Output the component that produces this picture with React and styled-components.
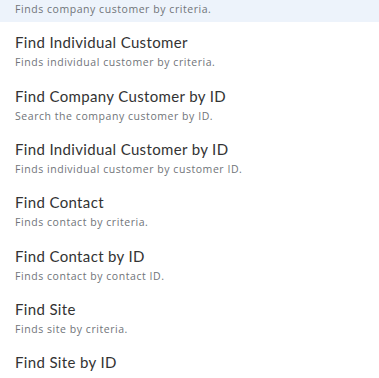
import React from "react";
import styled, { createGlobalStyle } from "styled-components";

const Global = createGlobalStyle`
  html, body { margin: 0; padding: 0; background: #ffffff; }
  body { font-family: Lato, "Open Sans", sans-serif; overflow: hidden; }
`;

const Viewport = styled.div`
  width: 379px;
  height: 378px;
  overflow: hidden;
  background: #ffffff;
`;

const List = styled.ul`
  list-style: none;
  margin: -31.33px 0 0;
  padding: 0;
`;

const Item = styled.li`
  padding: 9.4px 15px 3.93px;
  background: ${(p) => (p.$active ? "#edf3fb" : "transparent")};
  cursor: pointer;
`;

const Title = styled.div`
  font-family: Lato, sans-serif;
  font-size: 15px;
  line-height: 22px;
  letter-spacing: 0.35px;
  color: #333333;
  white-space: nowrap;
`;

const Subtitle = styled.div`
  font-family: "Open Sans", sans-serif;
  font-size: 10.5px;
  line-height: 18px;
  letter-spacing: 0.55px;
  color: #707479;
  white-space: nowrap;
`;

const items = [
  ["Find Company Customer", "Finds company customer by criteria."],
  ["Find Individual Customer", "Finds individual customer by criteria."],
  ["Find Company Customer by ID", "Search the company customer by ID."],
  ["Find Individual Customer by ID", "Finds individual customer by customer ID."],
  ["Find Contact", "Finds contact by criteria."],
  ["Find Contact by ID", "Finds contact by contact ID."],
  ["Find Site", "Finds site by criteria."],
  ["Find Site by ID", "Finds site by site ID."],
];

export default function App() {
  return (
    <>
      <Global />
      <Viewport>
        <List>
          {items.map(([t, s], i) => (
            <Item key={t} $active={i === 0}>
              <Title>{t}</Title>
              <Subtitle>{s}</Subtitle>
            </Item>
          ))}
        </List>
      </Viewport>
    </>
  );
}
